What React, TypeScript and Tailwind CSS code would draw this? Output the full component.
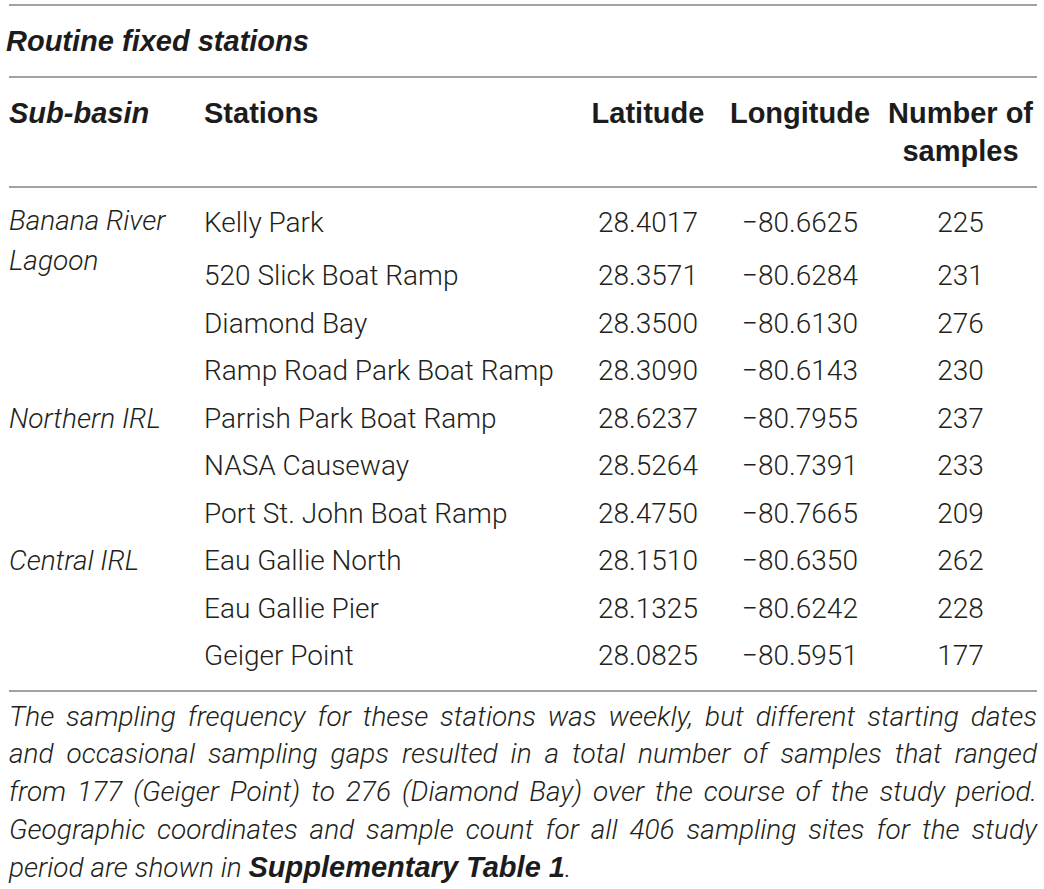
import React from 'react'

type Row = {
  basin?: string[],
  span?: number,
  station: string,
  lat: string,
  lon: string,
  n: string,
}

const rows: Row[] = [
  { basin: ['Banana River', 'Lagoon'], span: 4, station: 'Kelly Park', lat: '28.4017', lon: '−80.6625', n: '225' },
  { station: '520 Slick Boat Ramp', lat: '28.3571', lon: '−80.6284', n: '231' },
  { station: 'Diamond Bay', lat: '28.3500', lon: '−80.6130', n: '276' },
  { station: 'Ramp Road Park Boat Ramp', lat: '28.3090', lon: '−80.6143', n: '230' },
  { basin: ['Northern IRL'], span: 3, station: 'Parrish Park Boat Ramp', lat: '28.6237', lon: '−80.7955', n: '237' },
  { station: 'NASA Causeway', lat: '28.5264', lon: '−80.7391', n: '233' },
  { station: 'Port St. John Boat Ramp', lat: '28.4750', lon: '−80.7665', n: '209' },
  { basin: ['Central IRL'], span: 3, station: 'Eau Gallie North', lat: '28.1510', lon: '−80.6350', n: '262' },
  { station: 'Eau Gallie Pier', lat: '28.1325', lon: '−80.6242', n: '228' },
  { station: 'Geiger Point', lat: '28.0825', lon: '−80.5951', n: '177' },
]

const spanClass: Record<number, string> = { 3: 'row-span-3', 4: 'row-span-4' }

const cols = 'grid grid-cols-[195px_376px_136px_168px_153px]'
const bold = "[font-family:'Liberation_Sans',Arial,sans-serif] font-bold text-[29px] text-[#1c1c1c]"
const light = "[font-family:Roboto,'Liberation_Sans',sans-serif] font-light text-[28px] text-[#231f20]"
const rule = 'border-t-2 border-[#a2a2a2]'

function App() {
  return (
    <div className="w-[1044px] h-[889px] bg-white overflow-hidden">
      <div className="ml-[9px] w-[1028px] pt-[4px]">
        <div className={rule} />
        <div className={`${bold} italic leading-[38px] pt-[16px] pb-[16px] -ml-[3px]`}>Routine fixed stations</div>
        <div className={rule} />

        {/* header */}
        <div className={`${cols} ${bold} leading-[38px] pt-[16px] pb-[16px]`}>
          <div className="italic">Sub-basin</div>
          <div>Stations</div>
          <div className="text-center">Latitude</div>
          <div className="text-center">Longitude</div>
          <div className="text-center">Number of<br />samples</div>
        </div>
        <div className={rule} />

        {/* body */}
        <div className={`${cols} grid-rows-[53px_repeat(9,47.5px)] ${light} leading-[47.5px] pt-[11px] pb-[10px]`}>
          {rows.map((r, i) => {
            const cells = []
            if (r.basin) {
              cells.push(
                <div
                  key={`b${i}`}
                  className={`col-start-1 italic ${spanClass[r.span ?? 3]} ${r.basin.length > 1 ? 'leading-[40px] pt-[2px]' : ''}`}
                  style={{ gridRowStart: i + 1 }}
                >
                  {r.basin.map((b) => <div key={b}>{b}</div>)}
                </div>
              )
            }
            const rs = { gridRowStart: i + 1 }
            cells.push(
              <div key={`s${i}`} className="col-start-2 whitespace-nowrap" style={rs}>{r.station}</div>,
              <div key={`la${i}`} className="col-start-3 text-center" style={rs}>{r.lat}</div>,
              <div key={`lo${i}`} className="col-start-4 text-center" style={rs}>{r.lon}</div>,
              <div key={`n${i}`} className="col-start-5 text-center" style={rs}>{r.n}</div>
            )
            return cells
          })}
        </div>
        <div className={rule} />

        {/* footnote */}
        <div className={`${light} text-[28.5px] italic leading-[37.8px] pt-[6px]`}>
          <div className="text-justify [text-align-last:justify]">The sampling frequency for these stations was weekly, but different starting dates</div>
          <div className="text-justify [text-align-last:justify]">and occasional sampling gaps resulted in a total number of samples that ranged</div>
          <div className="text-justify [text-align-last:justify]">from 177 (Geiger Point) to 276 (Diamond Bay) over the course of the study period.</div>
          <div className="text-justify [text-align-last:justify]">Geographic coordinates and sample count for all 406 sampling sites for the study</div>
          <div>period are shown in <span className={`${bold} text-[28.5px] italic`}>Supplementary Table 1</span>.</div>
        </div>
      </div>
    </div>
  )
}

export default App
